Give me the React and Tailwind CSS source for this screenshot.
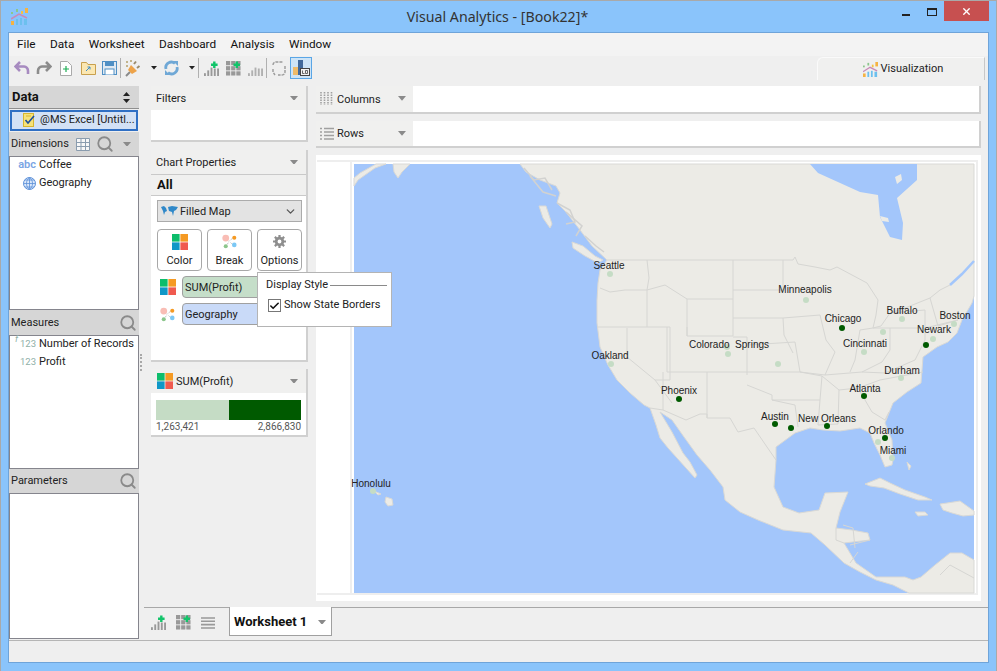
import { Check, ChevronDown, Search, X } from 'lucide-react';

const Caret = ({ className = 'text-[#8a8a8a]', w = 8 }) => (
  <svg width={w} height={w * 0.6} viewBox="0 0 10 6" className={`shrink-0 ${className}`}><path d="M0 0h10L5 6z" fill="currentColor" /></svg>
);

const Squares = ({ size = 16 }) => (
  <svg width={size} height={size} viewBox="0 0 21 21" className="shrink-0">
    <rect x="0" y="0" width="10" height="10" fill="#0dbd6b" />
    <rect x="11" y="0" width="10" height="10" fill="#f59a23" />
    <rect x="0" y="11" width="10" height="10" fill="#0f97c7" />
    <rect x="11" y="11" width="10" height="10" fill="#f05a4f" />
  </svg>
);

const BreakIcon = () => (
  <svg width="15" height="15" viewBox="0 0 22 22" className="shrink-0">
    <path d="M6 7l4 4M17 5l-6 5M6 17l4-5M17 17l-5-5" stroke="#aaa" strokeWidth="1" strokeDasharray="2 1" />
    <circle cx="5.5" cy="6" r="5" fill="#f9bdb5" />
    <circle cx="18" cy="5.5" r="3" fill="#f59a23" />
    <circle cx="5.5" cy="18" r="3" fill="#8cc68c" />
    <circle cx="18" cy="16" r="3.4" fill="#7cc8f5" />
  </svg>
);

const Gear = () => (
  <svg width="13" height="13" viewBox="0 0 14 14" className="shrink-0">
    <circle cx="7" cy="7" r="3.6" fill="none" stroke="#8e8e8e" strokeWidth="3" />
    <path d="M7 0v3M7 11v3M0 7h3M11 7h3M2 2l2 2M10 10l2 2M12 2l-2 2M4 10l-2 2" stroke="#8e8e8e" strokeWidth="2.4" />
  </svg>
);

const Lens = () => <Search size={18} strokeWidth={2.4} className="text-[#8a8a8a] shrink-0" />;

const AppLogo = ({ size = 17 }) => (
  <svg width={size} height={size} viewBox="0 0 17 17" className="shrink-0">
    <rect x="0" y="4" width="2" height="2" fill="#8cc68c" />
    <rect x="5" y="1" width="2" height="3" fill="#8cc68c" />
    <rect x="10" y="3" width="2" height="3" fill="#f5c242" />
    <rect x="14" y="0" width="3" height="5" fill="#f5b342" />
    <rect x="0" y="13" width="3" height="4" fill="#f5b342" />
    <rect x="5" y="11" width="2" height="6" fill="#6cc0ee" />
    <rect x="9" y="10" width="2" height="7" fill="#6cc0ee" />
    <rect x="13" y="11" width="3" height="6" fill="#6cc0ee" />
    <path d="M0 11l8-5 8 4" fill="none" stroke="#c98bb8" strokeWidth="1.5" />
  </svg>
);

const Bars = ({ plus, color = '#999999' }) => (
  <svg width="15" height="15" viewBox="0 0 16 16" className="shrink-0">
    <rect x="0" y="13" width="2" height="3" fill={color} />
    <rect x="3.5" y="10" width="2" height="6" fill={color} />
    <rect x="7" y="7" width="2" height="9" fill={color} />
    <rect x="10.5" y="8" width="2" height="8" fill={color} />
    <rect x="14" y="8" width="2" height="8" fill={color} />
    {plus && <path d="M11 .5v7M7.500 4h7" stroke="#12c46a" strokeWidth="2.6" />}
  </svg>
);

const GridPlus = () => (
  <svg width="15" height="15" viewBox="0 0 16 16" className="shrink-0">
    {[0, 5.5, 11].map(x => [0, 5.5, 11].map(y => (
      <rect key={`${x}-${y}`} x={x} y={y} width="4.5" height="4.5" fill="#999999" />
    )))}
    <path d="M11.500 .5v7M8 4h7" stroke="#12c46a" strokeWidth="2.6" />
  </svg>
);

const ToolIcon = ({ w = 22, children }) => (
  <div className="flex items-center justify-center shrink-0 h-full" style={{ width: w }}>{children}</div>
);

const Sep = () => <div className="w-[1px] h-[20px] bg-[#b0b0b0] shrink-0" />;

const Toolbar = () => (
  <div className="h-[24px] flex items-center pl-[2px] bg-[#efefef] relative">
    <ToolIcon><svg width="16" height="15" viewBox="0 0 16 15"><path d="M6 1L1.500 5.500 6 10M2 5.500h8a4.500 4.500 0 0 1 4 4.500v3" fill="none" stroke="#a78bc0" strokeWidth="2.600" /></svg></ToolIcon>
    <ToolIcon><svg width="16" height="15" viewBox="0 0 16 15"><path d="M10 1l4.500 4.500L10 10M14 5.500H6a4.500 4.500 0 0 0-4 4.500v3" fill="none" stroke="#8c8c8c" strokeWidth="2.600" /></svg></ToolIcon>
    <ToolIcon><svg width="12" height="15" viewBox="0 0 12 15"><path d="M.5.5h7l4 4v10H.5z" fill="#fff" stroke="#aaa" /><path d="M6 5v6M3 8h6" stroke="#1fae55" strokeWidth="1.200" /></svg></ToolIcon>
    <ToolIcon><svg width="15" height="13" viewBox="0 0 15 13"><path d="M.5 12.500V.5h5l1.500 2h7.500v10z" fill="#fbe7b2" stroke="#c8a04e" /><path d="M5 9l4-4M6.500 5H9v2.500" fill="none" stroke="#3a8bc7" /></svg></ToolIcon>
    <ToolIcon w={21}><svg width="15" height="14" viewBox="0 0 15 14"><rect x=".5" y=".5" width="14" height="13" fill="#dfe9f2" stroke="#4f8fc4" /><rect x="3" y="0" width="9" height="5" fill="#4f8fc4" /><rect x="3" y="8" width="9" height="6" fill="#fff" stroke="#4f8fc4" /></svg></ToolIcon>
    <Sep />
    <ToolIcon w={24}><svg width="17" height="17" viewBox="0 0 17 17"><path d="M1 16l4-4" stroke="#8a8a8a" strokeWidth="2" /><path d="M3 10l4 4 5-3-6-6z" fill="#eda34a" /><path d="M9 4l2-2.500M12 8l2.500-2" stroke="#9a8a6a" strokeWidth="2" /><path d="M1 1h2v2H1zM1 5h2v2H1zM5 0h2v2H5z" fill="#c2b48c" /></svg></ToolIcon>
    <div className="w-[6px]" />
    <Caret className="text-[#222]" w={6} />
    <div className="w-[5px]" />
    <ToolIcon w={18}><svg width="15" height="16" viewBox="0 0 15 16"><path d="M2 9a5.500 5.500 0 0 1 9-5.500M13 7a5.500 5.500 0 0 1-9 5.500" fill="none" stroke="#6fa8d6" strokeWidth="2.800" /><path d="M9 1h5v5zM6 15H1v-5z" fill="#6fa8d6" /></svg></ToolIcon>
    <div className="w-[9px]" />
    <Caret className="text-[#222]" w={6} />
    <div className="w-[3px]" />
    <Sep />
    <ToolIcon w={24}><Bars plus /></ToolIcon>
    <ToolIcon w={21}><GridPlus /></ToolIcon>
    <ToolIcon w={22}><Bars color="#b0b0b0" /></ToolIcon>
    <Sep />
    <ToolIcon w={23}><svg width="15" height="15" viewBox="0 0 15 15"><path d="M2 4a3 3 0 0 1 3-3h7M14 5v6a3 3 0 0 1-3 3H7M2 8v3l2 3" fill="none" stroke="#9a9a9a" strokeWidth="1.400" strokeDasharray="3 1" /></svg></ToolIcon>
    <div className="w-[22px] h-[22px] bg-[#cde4f7] border border-[#5aa6e6] flex items-center justify-center shrink-0">
      <svg width="17" height="18" viewBox="0 0 17 18"><rect x="0" y="8" width="5" height="8" fill="#eebb6a" /><rect x="5" y="1" width="5" height="15" fill="#41699b" /><rect x="7.500" y="9.500" width="9" height="7" fill="#f2f2f2" stroke="#444" /><path d="M9.500 11.500v3h2M12.500 11.500h2v3h-2z" fill="none" stroke="#444" strokeWidth=".8" /></svg>
    </div>
    <div className="absolute right-[3px] top-[1px] w-[168px] h-[23px] rounded-tl-md border-t border-l border-r border-[#fafafa] border-r-[#c8c8c8] bg-[#f0f0ef] flex items-center justify-center gap-[3px] pl-[4px] text-[11px] text-[#222]">
      <AppLogo size={15} />
      <span className="pt-[1px]">Visualization</span>
    </div>
  </div>
);

const SideHeader = ({ title, className = 'h-[24px]', children }) => (
  <div className={`${className} shrink-0 bg-[#d6d6d6] flex items-center pl-[2px] pr-[2px] text-[11px] text-[#222]`}>
    <span className="flex-1">{title}</span>
    {children}
  </div>
);

const SideList = ({ className, children }) => (
  <div className={`bg-white border border-[#85858d] ${className}`}>{children}</div>
);

const DataRow = ({ icon, label }) => (
  <div className="h-[18px] flex items-center pb-[2px] text-[11px] text-[#222] whitespace-nowrap">
    <div className="w-[29px] flex justify-end pr-[3px] shrink-0">{icon}</div>
    <span>{label}</span>
  </div>
);

const Globe = () => (
  <svg width="13" height="13" viewBox="0 0 13 13">
    <circle cx="6.500" cy="6.500" r="6" fill="#dbe8fa" stroke="#5b8fd8" />
    <path d="M.5 6.500h12M6.500.5v12M2 3h9M2 10h9M6.500.5c-4 3-4 9 0 12M6.500.5c4 3 4 9 0 12" fill="none" stroke="#5b8fd8" strokeWidth=".8" />
  </svg>
);

const Num = ({ fx }) => (
  <span className="relative text-[9.5px] text-[#8fb0a8]">
    {fx && <span className="absolute -left-[5px] -top-[4px] italic text-[9px]">f</span>}123
  </span>
);

const LeftPanel = () => (
  <div className="w-[130px] shrink-0 flex flex-col pt-[6px] mb-[1px]">
    <div className="h-[23px] shrink-0 bg-[#d6d6d6] flex items-center pl-[3px] pr-[9px] font-bold text-[13px] text-[#111] border-b border-[#8f8f8f]">
      <span className="flex-1">Data</span>
      <svg width="7" height="11" viewBox="0 0 7 11"><path d="M3.500 0L7 4H0zM3.500 11L0 7h7z" fill="#222" /></svg>
    </div>
    <div className="h-[23px] shrink-0 p-[1px] bg-[#efefef]">
      <div className="h-full border-[2px] border-[#2f6fc4] bg-[#d3e1f5] flex items-center pl-[11px] text-[11px] text-[#222]">
        <svg width="13" height="15" viewBox="0 0 13 15" className="shrink-0 mr-[4px]"><rect x=".5" y=".5" width="10" height="13" fill="#f6e27a" stroke="#d9b62e" /><path d="M3 3h5" stroke="#d9b62e" /><path d="M2.500 7l2.500 3 6-7" fill="none" stroke="#1d4f9c" strokeWidth="1.600" /></svg>
        <span className="whitespace-nowrap">@MS Excel [Untitl...</span>
      </div>
    </div>
    <SideHeader title="Dimensions">
      <svg width="14" height="13" viewBox="0 0 14 13" className="mr-[6px]"><path d="M.5.5h13v12H.5zM.5 4.500h13M.5 8.500h13M5 .5v12M9.500.5v12" fill="#f7f7f7" stroke="#8a9cae" /></svg>
      <Lens />
      <div className="w-[23px] flex justify-end pr-[6px]"><Caret /></div>
    </SideHeader>
    <SideList className="h-[154px] shrink-0">
      <DataRow icon={<span className="text-[11px] font-semibold text-[#7ba6e4]">abc</span>} label="Coffee" />
      <DataRow icon={<Globe />} label="Geography" />
    </SideList>
    <SideHeader title="Measures" className="h-[25px] pt-[1px]"><Lens /></SideHeader>
    <SideList className="h-[134px] shrink-0">
      <DataRow icon={<Num fx />} label="Number of Records" />
      <DataRow icon={<Num />} label="Profit" />
    </SideList>
    <SideHeader title="Parameters"><Lens /></SideHeader>
    <SideList className="flex-1" />
  </div>
);

const Card = ({ className = '', children }) => (
  <div className={`bg-white border-r-2 border-b-2 border-[#d0d0d0] ${className}`}>{children}</div>
);

const CardHeader = ({ children }) => (
  <div className="h-[24px] bg-[#f0f0ef] flex items-center pl-[5px] pr-[8px] text-[11px] text-[#222]">
    <div className="flex-1 flex items-center gap-[3px] pt-[2px]">{children}</div>
    <Caret />
  </div>
);

const Tile = ({ icon, label }) => (
  <div className="w-[45px] h-[42px] border border-[#a8a8a8] rounded-[4px] bg-white flex flex-col items-center pt-[3px] text-[11px] leading-[14px] text-[#222]">
    <div className="h-[17px] flex items-center justify-center">{icon}</div>
    <span className="mt-[4px]">{label}</span>
  </div>
);

const Pill = ({ icon, label, className }) => (
  <div className="flex items-center h-[22px] pl-[9px] pr-[4px]">
    <div className="w-[22px] shrink-0">{icon}</div>
    <div className={`flex-1 h-full rounded-[4px] border border-[#a0a0a0] flex items-center pl-[2px] pt-[2px] text-[11px] text-[#222] ${className}`}>{label}</div>
  </div>
);

const MiddlePanel = () => (
  <div className="w-[157px] shrink-0 ml-[12px] flex flex-col">
    <Card className="h-[56px] mb-[8px]"><CardHeader>Filters</CardHeader></Card>
    <Card className="h-[212px] mb-[7px] relative">
      <CardHeader>Chart Properties</CardHeader>
      <div className="h-[22px] bg-[#f0f0ef] border-t border-b border-[#c9c9c9] flex items-center pl-[6px] font-bold text-[13px] text-[#111]">All</div>
      <div className="pl-[6px] pr-[4px] pt-[4px]">
        <div className="h-[22px] border border-[#ababab] bg-[#e3e3e3] flex items-center pl-[3px] pr-[4px] text-[11px] text-[#222]">
          <svg width="17" height="11" viewBox="0 0 17 11" className="mr-[2px] shrink-0"><path d="M0 1l3-1 2 2 1 3-2 1-1 3-1-4zM7 1l4-1 6 1-2 3-2 1-1 5-1-4-3-1z" fill="#2f88c9" /></svg>
          <span className="flex-1 pt-[2px]">Filled Map</span>
          <ChevronDown size={13} strokeWidth={2.4} className="text-[#555]" />
        </div>
        <div className="flex gap-[5px] mt-[7px]">
          <Tile icon={<Squares />} label="Color" />
          <Tile icon={<BreakIcon />} label="Break" />
          <Tile icon={<Gear />} label="Options" />
        </div>
      </div>
      <div className="flex flex-col gap-[5px] mt-[5px]">
        <Pill icon={<Squares />} label="SUM(Profit)" className="bg-[#c5dec9]" />
        <Pill icon={<BreakIcon />} label="Geography" className="bg-[#c9daf8]" />
      </div>
      <div className="absolute left-[106px] top-[122px] w-[135px] h-[55px] z-10 bg-white border border-[#b4b4b4] pl-[8px] pr-[4px] pt-[4px] text-[11px] text-[#222]">
        <div className="flex items-center gap-[2px] h-[16px]">
          <span className="whitespace-nowrap">Display Style</span>
          <div className="flex-1 h-[1px] bg-[#8a8a8a]" />
        </div>
        <div className="flex items-center h-[15px] mt-[5px] pl-[2px] gap-[3px] whitespace-nowrap">
          <div className="w-[13px] h-[13px] border border-[#777] bg-white flex items-center justify-center shrink-0">
            <Check size={12} strokeWidth={3.5} className="text-[#111]" />
          </div>
          <span>Show State Borders</span>
        </div>
      </div>
    </Card>
    <Card className="h-[68px]">
      <CardHeader><div className="pl-[1px] -mt-[2px]"><Squares /></div><span>SUM(Profit)</span></CardHeader>
      <div className="flex h-[20px] mt-[7px] mx-[5px]">
        <div className="w-[73px] bg-[#c5dcc5]" />
        <div className="flex-1 bg-[#005a00]" />
      </div>
      <div className="flex justify-between mx-[5px] mt-[1px] text-[10px] leading-[12px] text-[#555]">
        <span>1,263,421</span>
        <span>2,866,830</span>
      </div>
    </Card>
  </div>
);

const Shelf = ({ title, icon }) => (
  <Card className="h-[28px] flex">
    <div className="w-[97px] bg-[#f0f0ef] flex items-center pl-[4px] pr-[7px] text-[11px] text-[#222] shrink-0">
      <div className="w-[17px]">{icon}</div>
      <span className="flex-1 pt-[2px]">{title}</span>
      <Caret />
    </div>
  </Card>
);

const land = [
  // north america, west coast to panama and back round the gulf and east coast
  '520,164 526,172 540,180 556,186 560,193 557,203 566,212 580,230 592,246 607,260 600,270 598,283 597,300 597,323 600,347 608,365 617,380 630,393 644,405 650,408 656,425 660,438 668,448 677,458 686,468 695,478 697,475 690,462 683,453 672,432 660,412 672,420 684,437 697,455 710,470 723,487 725,500 740,512 758,520 783,530 811,533 825,545 844,563 860,572 876,580 893,585 909,593 974,593 974,560 962,553 950,553 935,565 921,577 913,580 905,577 897,577 876,577 856,563 844,543 870,540 868,533 852,530 836,528 840,512 848,492 825,493 819,510 799,513 783,507 774,487 776,460 776,447 795,433 810,428 823,430 840,431 860,428 870,433 874,443 880,455 885,467 892,465 893,460 892,440 885,423 893,403 907,392 921,383 923,357 937,347 948,342 957,333 962,320 972,303 974,296 974,164',
  // alaska strip top left
  '354,186 358,180 375,168 386,164 376,164 360,173 354,178',
  '393,164 410,164 402,172 398,178 394,172',
  // vancouver island
  '572,242 583,246 595,256 603,260 598,263 585,256 573,248',
  '539,206 546,206 552,224 550,228 543,218',
  // hawaii
  '386,497 392,499 393,505 388,506 385,502',
  '374,491 381,494 378,495',
  // cuba and the islands
  '865,484 880,478 890,483 905,490 925,497 932,500 918,500 900,494 884,488 870,486',
  '940,504 947,503 960,501 974,511 974,515 963,516 952,513 943,510',
  '915,512 925,512 928,515 918,516',
  '907,462 911,466 909,470',
];

// hudson bay cut out of the land
const bay = '917,164 917,180 897,198 903,223 902,240 890,237 880,217 878,195 860,192 818,173 810,164';
const bayIslands = ['880,216 888,218 889,222 882,221', '895,177 901,174 902,180 897,184'];

// inlets along the bc coast
const inlets = [
  '524,168 534,180 545,178 552,190',
  '530,176 543,192 556,196',
  '557,203 570,210 575,222 566,224',
  '566,212 582,226 576,236',
  '585,236 596,246 604,252',
];

const borders = [
  // canada line and lakes
  '607,260 793,260 795,257 798,264 815,267 830,270 837,267 852,275 867,283 878,300 876,315 873,328 881,326 890,313 905,308 930,298 940,290 950,285',
  // northwest
  '600,288 610,292 625,290 647,290',
  '647,260 649,278 647,290 647,327',
  '597,327 670,327',
  '627,328 627,357 655,380 672,403',
  '670,327 670,380 655,380',
  '687,299 733,299 733,336 687,336 687,299',
  '647,290 665,285 687,299',
  '733,260 733,299',
  '733,290 783,290 783,260',
  '733,318 783,318 784,335 793,353',
  '733,337 747,337 747,375',
  '667,327 667,372 747,372',
  '687,336 687,327',
  '707,372 707,418',
  '663,372 663,410 650,408',
  '663,410 686,420 700,414 707,414 707,418 730,418 738,432 754,428 767,447 776,460',
  '747,345 795,342 800,372 747,372',
  '783,318 820,315 826,340 835,352 825,375 800,372',
  '800,372 822,376 820,400 772,400 772,395 747,385',
  '772,400 795,405 798,427',
  '820,400 818,425 838,424 839,390 822,376',
  '839,390 858,388 872,412 885,420 889,412',
  '858,388 880,380 923,372',
  '825,375 862,372 885,373 915,360',
  '873,328 860,330 855,360 850,372',
  '873,328 890,328 890,350 882,362 862,372',
  '890,328 925,328 925,340 915,360',
  '890,313 925,310 925,328',
  '930,298 938,326 958,320',
  '925,328 958,320',
  // mexico and central america
  '843,525 853,528 855,548',
  '836,528 836,540 844,543',
  '850,545 870,540',
  '850,563 858,552',
  '940,575 950,565 974,578',
];

const darkDots = [[842, 328], [926, 345], [679, 399], [775, 424], [791, 428], [827, 426], [864, 396], [885, 438]];
const lightDots = [[610, 274], [611, 364], [806, 300], [727, 347], [728, 354], [778, 364], [902, 319], [954, 324], [933, 339], [864, 352], [883, 332], [901, 378], [878, 442], [892, 458], [373, 491]];

const labels = [
  ['Seattle', 609, 269], ['Oakland', 610, 359], ['Minneapolis', 805, 293], ['Chicago', 843, 322],
  ['Buffalo', 902, 314], ['Boston', 955, 319], ['Newark', 934, 333], ['Cincinnati', 865, 347],
  ['Colorado  Springs', 729, 348], ['Durham', 902, 374], ['Atlanta', 865, 392], ['Phoenix', 679, 394],
  ['Austin', 775, 420], ['New Orleans', 827, 422], ['Orlando', 886, 434], ['Miami', 893, 454], ['Honolulu', 371, 487],
];

const MapChart = () => (
  <svg viewBox="354 164 620 429" width="620" height="429" className="block shrink-0 overflow-visible">
    <rect x="354" y="164" width="620" height="429" fill="#a3c6fb" />
    {land.map((p, i) => <polygon key={i} points={p} fill="#ecebe6" stroke="#d9d9d6" strokeWidth="1" strokeLinejoin="round" />)}
    <polygon points={bay} fill="#a3c6fb" />
    {bayIslands.map((p, i) => <polygon key={i} points={p} fill="#ecebe6" />)}
    {inlets.map((p, i) => <polyline key={i} points={p} fill="none" stroke="#d2d2d0" strokeWidth="1.5" />)}
    <polyline points="950,285 962,274 974,261" fill="none" stroke="#a3c6fb" strokeWidth="2.500" />
    {borders.map((p, i) => <polyline key={i} points={p} fill="none" stroke="#d6d6d3" strokeWidth="1" />)}
    {lightDots.map(([x, y], i) => <circle key={i} cx={x} cy={y} r="3" fill="#c5dcc5" />)}
    {darkDots.map(([x, y], i) => <circle key={i} cx={x} cy={y} r="3" fill="#005a00" />)}
    {labels.map(([t, x, y]) => (
      <text key={t} x={x} y={y} textAnchor="middle" fontSize="10" fontFamily="'Liberation Sans', sans-serif" fill="#222" xmlSpace="preserve">{t}</text>
    ))}
  </svg>
);

const RightPanel = () => (
  <div className="flex-1 min-w-0 ml-[8px] mr-[7px] flex flex-col gap-[7px]">
    <Shelf title="Columns" icon={
      <svg width="13" height="13" viewBox="0 0 13 13"><path d="M1 0v13M4.500 0v13M8 0v13M11.500 0v13" stroke="#a0a0a0" strokeWidth="1.600" strokeDasharray="1.500 1" /></svg>
    } />
    <Shelf title="Rows" icon={
      <svg width="14" height="13" viewBox="0 0 14 13"><path d="M0 1.500h2M4 1.500h10M0 5h2M4 5h10M0 8.500h2M4 8.500h10M0 12h2M4 12h10" stroke="#a0a0a0" strokeWidth="1.400" /></svg>
    } />
    <div className="flex-1 bg-white pt-[5px] pl-[1px] pr-[3px] pb-[6px] flex flex-col">
      <div className="flex-1 border-t-2 border-b-2 border-r-2 border-[#eeeeee] flex pr-[1px]">
        <div className="w-[35px] shrink-0 border-r-2 border-[#eeeeee]" />
        <div className="pl-[2px] pt-[2px]"><MapChart /></div>
      </div>
    </div>
  </div>
);

const TabBar = () => (
  <div className="h-[33px] shrink-0 ml-[5px] flex flex-col">
    <div className="flex h-[28px]">
      <div className="w-[85px] border-t border-[#a8a8a8] flex items-center pl-[7px] pt-[2px] gap-[10px]">
        <Bars plus />
        <GridPlus />
        <svg width="14" height="12" viewBox="0 0 14 12"><path d="M0 1h14M0 4.300h14M0 7.600h14M0 11h14" stroke="#999999" strokeWidth="1.600" /></svg>
      </div>
      <div className="w-[103px] h-[29px] bg-white border-l border-r border-b border-[#a0a0a0] flex items-center pl-[4px] pr-[5px] pt-[2px] text-[13px] font-bold text-[#111] -mb-[1px]">
        <span className="flex-1">Worksheet 1</span>
        <Caret />
      </div>
      <div className="flex-1 border-t border-[#a8a8a8]" />
    </div>
  </div>
);

export default function App() {
  return (
    <div className="w-[997px] h-[671px] flex flex-col bg-[#8ac4fb] border-t border-l border-r border-[#a9a9a9] overflow-hidden font-['Roboto',sans-serif]">
      <div className="h-[31px] shrink-0 grid grid-cols-[1fr_auto_1fr]">
        <div className="pl-[10px] pt-[7px]"><AppLogo /></div>
        <div className="font-['Noto_Sans',sans-serif] text-[14.2px] text-[#333] leading-[31px] whitespace-nowrap -translate-x-[1px]">Visual Analytics - [Book22]*</div>
        <div className="flex justify-end items-start pr-[7px]">
          <div className="w-[8px] h-[2px] bg-[#222] mt-[13px] mr-[17px]" />
          <div className="w-[10px] h-[8px] border border-t-2 border-[#222] mt-[7px] mr-[7px]" />
          <div className="w-[45px] h-[20px] bg-[#c75050] flex items-center justify-center">
            <X size={11} strokeWidth={3} className="text-white" />
          </div>
        </div>
      </div>
      <div className="flex-1 min-h-0 mx-[7px] mb-[8px] flex flex-col bg-[#efefef] border border-[#6fa4d9]">
        <div className="h-[23px] shrink-0 bg-[#f3f3f3] flex items-center gap-[14.4px] pl-[8px] pt-[1px] text-[11.8px] text-[#111]">
          {['File', 'Data', 'Worksheet', 'Dashboard', 'Analysis', 'Window'].map(m => <span key={m}>{m}</span>)}
        </div>
        <Toolbar />
        <div className="flex-1 min-h-0 flex border-b border-[#b5b5b5]">
          <LeftPanel />
          <div className="flex-1 min-w-0 flex flex-col relative">
            <div className="flex-1 min-h-0 flex pt-[6px]">
              <MiddlePanel />
              <RightPanel />
            </div>
            <div className="h-[6px] shrink-0" />
            <TabBar />
            <div className="absolute left-[1px] top-[274px] w-[2px] h-[17px] border-l-2 border-dotted border-[#a8a8a8]" />
          </div>
        </div>
        <div className="h-[21px] shrink-0 bg-[#efefef]" />
      </div>
    </div>
  );
}
